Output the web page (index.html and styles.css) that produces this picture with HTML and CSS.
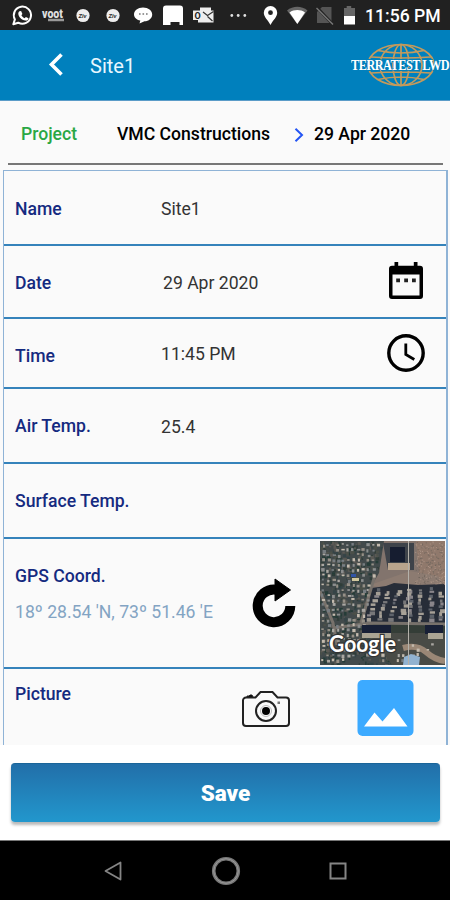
FILE: index.html
```html
<!DOCTYPE html>
<html lang="en">
  <head>
    <meta charset="UTF-8" />
    <meta name="viewport" content="width=device-width, initial-scale=1.0" />
    <title>Site1</title>
    <link rel="stylesheet" href="styles.css">
  </head>
  <body>
    <div class="statusbar">
      <svg class="statusbar_icons" width="248" height="30" viewBox="0 0 248 30">
        <!-- whatsapp -->
        <path d="M13.3 24.3l1.6-4.9a8.6 8.6 0 1 1 3.3 3.3z" fill="none" stroke="#fff" stroke-width="2" stroke-linejoin="round" />
        <path d="M19.4 11.3l1.7-.3 1.3 3-1 1.3c.8 1.5 1.8 2.3 3.2 2.9l1.3-1.3 2.6 1.3c0 1.8-1.5 2.6-3 2.4-4-.6-7.3-4.3-7.2-7.2 0-.9.4-1.6 1.100-2.100z" fill="#fff" />
        <!-- voot -->
        <text class="voot" x="42" y="18" textLength="21" lengthAdjust="spacingAndGlyphs">voot</text>
        <path d="M48 20h16" stroke="#999" stroke-width="2.500" />
        <circle cx="83" cy="15.500" r="6.600" fill="#eee" />
        <text class="zee" x="78.500" y="18">Ziv</text>
        <circle cx="113" cy="15.500" r="6.600" fill="#eee" />
        <text class="zee" x="108.500" y="18">Ziv</text>
        <!-- message -->
        <path d="M143 7.500c5.200 0 9.200 2.900 9.200 6.900s-3.500 6.600-7.700 6.900l-5 2.200.8-2.900c-3.900-1-6.300-3.300-6.300-6.200 0-4 3.900-6.900 9-6.900z" fill="#fff" />
        <path d="M139 14h1.600M142.500 14h1.600M146 14h1.600" stroke="#777" stroke-width="1.300" />
        <path d="M166 5.500h14a3 3 0 0 1 3 3V25h-3.500v-3h-9v3H163V8.500a3 3 0 0 1 3-3z" fill="#fff" />
        <!-- outlook -->
        <path d="M200 7.500h11v3h2.500v12H198V20h-5v-9.500h7z" fill="#eee" />
        <text class="outlook" x="194.500" y="19">O</text>
        <path d="M203 12l4.500 3.500 6-4M207.500 16.500l5 4.500" fill="none" stroke="#333" stroke-width="1.200" />
        <g fill="#e0e0e0">
          <circle cx="231.800" cy="15.500" r="1.400" />
          <circle cx="238.200" cy="15.500" r="1.400" />
          <circle cx="244.800" cy="15.500" r="1.400" />
        </g>
      </svg>
      <div class="statusbar_right">
        <svg width="94" height="30" viewBox="0 0 94 30">
          <path fill-rule="evenodd" d="M7.500 6a6.700 6.700 0 0 1 6.700 6.700c0 4.300-4.200 7.300-6.700 12.300C5 20 .8 17 .8 12.700A6.700 6.700 0 0 1 7.500 6zm0 4.300a2.400 2.400 0 1 0 0 4.800 2.400 2.400 0 0 0 0-4.800z" fill="#fff" />
          <path d="M24 10.500c6-5 14.500-5 20.500 0L34.300 24z" fill="#666" />
          <path d="M26.500 12.500c4.700-3.200 10.900-3.200 15.500 0L34.300 24z" fill="#fff" />
          <path d="M59 7h9.500v16H54V12z" fill="#555" />
          <path d="M54 7.500l16 17" stroke="#222" stroke-width="3" />
          <path d="M53.500 8l16.500 16.500" stroke="#777" stroke-width="1.500" />
          <path d="M83.700 6h4.500v2H92v9H81V8h2.700z" fill="#666" />
          <path d="M81 16h11v8.500H81z" fill="#fff" />
        </svg>
        <span class="clock">11:56 PM</span>
      </div>
    </div>

    <header class="header">
      <svg class="header_back" width="16" height="24" viewBox="0 0 16 24">
        <path d="M13.500 2.500L3.500 12.500l10 10" fill="none" stroke="#fff" stroke-width="3.600" />
      </svg>
      <h1>Site1</h1>
      <div class="header_logo">
        <svg width="68" height="46" viewBox="16 0 68 46">
          <g fill="none" stroke="#c49a5c" stroke-width="1.700">
            <ellipse cx="50" cy="24" rx="33" ry="20.500" />
            <ellipse cx="50" cy="24" rx="21" ry="20.500" />
            <ellipse cx="50" cy="24" rx="8" ry="20.500" />
            <path d="M50 3.500v41M27 9.500q23 5 46 0M20 16q30 2 60 0M27 38.500q23-5 46 0M20 32q30-2 60 0" />
          </g>
        </svg>
        <span class="logo_text">TERRATEST LWD</span>
      </div>
    </header>

    <nav class="project">
      <span class="project_label">Project</span>
      <span class="project_name">VMC Constructions</span>
      <svg width="10" height="16" viewBox="0 0 10 16">
        <path d="M1.500 2.800L8 9l-6.500 6.200" fill="none" stroke="#2455f4" stroke-width="2" />
      </svg>
      <span class="project_date">29 Apr 2020</span>
    </nav>

    <main class="form">
      <div class="row row_name">
        <label>Name</label>
        <span class="value value_name">Site1</span>
      </div>
      <div class="row row_date">
        <label>Date</label>
        <span class="value value_date">29 Apr 2020</span>
        <svg class="row_icon" width="36" height="40" viewBox="0 0 36 40">
          <path fill-rule="evenodd" d="M6.500 1h3.700v3.700h15.600V1h3.700v3.700H32a3 3 0 0 1 3 3V35a3 3 0 0 1-3 3H4a3 3 0 0 1-3-3V7.700a3 3 0 0 1 3-3h2.500zM4.500 13.500v21h27v-21z" />
          <path d="M8.200 17.500H12v3.700H8.200zM16.200 17.500H20v3.700h-3.800zM24 17.500h3.800v3.700H24z" fill="#222" />
        </svg>
      </div>
      <div class="row row_time">
        <label>Time</label>
        <span class="value value_time">11:45 PM</span>
        <svg class="row_icon" width="38" height="38" viewBox="0 0 38 38">
          <circle cx="19" cy="19" r="17.200" fill="none" stroke="#000" stroke-width="3.400" />
          <path d="M18.800 9.500v11l8.500 5" fill="none" stroke="#000" stroke-width="2.800" />
        </svg>
      </div>
      <div class="row row_air">
        <label>Air Temp.</label>
        <span class="value value_air">25.4</span>
      </div>
      <div class="row row_surface">
        <label>Surface Temp.</label>
      </div>
      <div class="row row_gps">
        <div class="gps_text">
          <label>GPS Coord.</label>
          <p>18º 28.54 'N, 73º 51.46 'E</p>
        </div>
        <svg class="gps_refresh" width="44" height="50" viewBox="0 0 44 50">
          <path d="M24 11.700A16.300 16.300 0 1 0 38.300 28" fill="none" stroke="#000" stroke-width="10" />
          <path d="M23 1L38.500 12 23 23z" stroke="#000" stroke-linejoin="round" />
        </svg>
        <svg class="gps_map" id="map" width="125" height="124" viewBox="0 0 125 124">
          <rect width="125" height="124" fill="#424a4b" />
          <g id="trees"></g>
          <path d="M64 0h61v60l-12 2-58-2-7-9 11-19z" fill="#82746d" />
          <path d="M96 0h29v44l-25-1z" fill="#90796c" />
          <path d="M50 44l40-14 28 5 7 10-25 4-50-4z" fill="#8c7b71" />
          <path d="M63 2h31v27H68z" fill="#3e434a" />
          <path d="M70 6h15v15H70z" fill="#161d30" />
          <path d="M68 22h22v7H68z" fill="#b8a48d" />
          <path d="M52 47l14-2 8-3 24 2 27-1v39H43z" fill="#272d38" />
          <path d="M42 82h83v42H72z" fill="#494b46" />
          <path d="M55 82l70 3v7H42z" fill="#343d37" />
          <path d="M0 50l13 32 4 22M13 87l38-5 74 1M55 34L41 82" fill="none" stroke="#77716b" stroke-width="3" />
          <path d="M83 107q14-4 23 4t19 9" fill="none" stroke="#9a8776" stroke-width="6" />
          <g id="houses"></g>
          <path d="M42 84h29v9H42zM105 84h18v9h-18z" fill="#182036" />
          <path d="M42 92h29v5H42zM108 92h15v6h-15z" fill="#aaa494" />
          <path d="M84 116l7-3 9 3-1 8H83z" fill="#91b2d0" />
          <path d="M31 33h5v3h-5z" fill="#3154a5" />
          <path d="M32 37h7v3h-7z" fill="#d1c89f" />
          <path d="M88.500 0v124" stroke="#b4b1aa" />
          <text class="google" x="9" y="111" textLength="67" lengthAdjust="spacingAndGlyphs">Google</text>
        </svg>
      </div>
      <div class="row row_picture">
        <label>Picture</label>
        <svg class="picture_camera" width="48" height="38" viewBox="0 0 48 38">
          <path d="M4 7.500h9.500l5-5.500h12l5 5.500H44a3 3 0 0 1 3 3V33a3 3 0 0 1-3 3H4a3 3 0 0 1-3-3V10.500a3 3 0 0 1 3-3z" fill="none" stroke="#222" stroke-width="2" />
          <path d="M5 7V6h2l1-1h2l1 2z" stroke="#222" />
          <circle cx="24" cy="21" r="10" fill="none" stroke="#222" stroke-width="2" />
          <circle cx="24" cy="21" r="5.500" fill="none" stroke="#bbb" />
          <circle cx="24" cy="21" r="4" />
          <path d="M35.500 11.500h2.500v2.500h-2.500z" fill="#777" />
        </svg>
        <svg class="picture_gallery" width="57" height="57" viewBox="0 0 57 57">
          <rect x=".5" width="56" height="56" rx="5" fill="#3caaff" />
          <path d="M7 46.500l10.500-14 8 9L37 28 50.500 46.500z" fill="#fff" />
        </svg>
      </div>
    </main>

    <div class="actions">
      <button class="save"><span>Save</span></button>
    </div>

    <footer class="navbar">
      <svg width="20" height="22" viewBox="0 0 20 22">
        <path d="M2.500 11L17.500 2.500v17z" fill="none" stroke="#858585" stroke-width="1.800" stroke-linejoin="round" />
      </svg>
      <svg width="30" height="30" viewBox="0 0 30 30">
        <circle cx="15" cy="15" r="12.300" fill="none" stroke="#777" stroke-width="3.600" />
        <circle cx="15" cy="15" r="12.300" fill="none" stroke="#999" />
      </svg>
      <svg width="20" height="20" viewBox="0 0 20 20">
        <rect x="2.500" y="2.500" width="15" height="15" fill="none" stroke="#858585" stroke-width="2" />
      </svg>
    </footer>

    <script src="map.js"></script>
  </body>
</html>
```
FILE: styles.css
```css
/* variables */
:root {
  --blue: #0080bd;
  --label: #152a80;
  --line: #3583bb;
  --surface: #fafafa;
}

/* base */
*,
::before,
::after {
  box-sizing: border-box;
  margin: 0;
  padding: 0;
}
body {
  width: 450px;
  height: 900px;
  display: flex;
  flex-direction: column;
  overflow: hidden;
  background-color: white;
  font-family: Roboto, "Liberation Sans", sans-serif;
  font-size: 17.6px;
}
svg {
  display: block;
  flex: none;
}
span,
label,
p {
  white-space: nowrap;
}

/* status bar */
.statusbar {
  height: 30px;
  flex: none;
  display: flex;
  justify-content: space-between;
  background-color: #212121;
}
.statusbar_right {
  display: flex;
  align-items: center;
  padding-right: 10px;
}
.clock {
  width: 75px;
  margin-left: 8px;
  padding-top: 2px;
  color: white;
  font-size: 17.6px;
  font-weight: 500;
}
.voot {
  fill: #ddd;
  font-size: 12px;
  font-weight: 900;
}
.zee {
  fill: #333;
  font-size: 6px;
  font-weight: bold;
  font-style: italic;
}
.outlook {
  fill: #222;
  font-size: 9px;
  font-weight: bold;
}

/* header section */
.header {
  height: 71px;
  flex: none;
  display: flex;
  align-items: center;
  padding: 0 0 2px 48px;
  background-color: var(--blue);
  border-bottom: 1px solid #5b9cc8;
}
.header h1 {
  margin-left: 26px;
  padding-top: 3px;
  color: #e8f7ff;
  font-size: 20px;
  font-weight: 400;
}
.header_logo {
  position: relative;
  display: flex;
  justify-content: center;
  width: 99px;
  margin-left: auto;
}
.logo_text {
  position: absolute;
  top: 14px;
  left: 0;
  color: white;
  font-family: "Liberation Serif", serif;
  font-size: 15.5px;
  font-weight: bold;
  line-height: 19px;
  letter-spacing: -0.6px;
  text-shadow: 0 1px var(--blue), 0 -1px var(--blue);
  transform: scaleX(0.79);
  transform-origin: left;
}

/* project line */
.project {
  height: 64px;
  flex: none;
  display: flex;
  align-items: center;
  margin-right: 7px;
  margin-left: 8px;
  padding-top: 3px;
  padding-left: 13px;
  border-bottom: 2px solid #777;
  font-weight: 500;
}
.project::before {
  content: "";
  position: absolute;
  top: 101px;
  left: 0;
  z-index: -1;
  width: 450px;
  height: 644px;
  background-color: var(--surface);
}
.project_label {
  width: 96px;
  color: #29a745;
}
.project_name {
  width: 177px;
}
.project_date {
  margin-left: 10px;
}

/* form rows */
.form {
  height: 575px;
  flex: none;
  margin: 5px 2px 0 3px;
  border: 1px solid #8fb3d6;
  border-width: 1px 2px 0 1px;
}
.row {
  display: flex;
  align-items: center;
  padding-left: 11px;
  border-bottom: 2px solid var(--line);
}
.row label {
  width: 146px;
  padding-top: 2px;
  color: var(--label);
  font-weight: 500;
}
.value {
  padding-top: 2px;
  color: #333;
}
.row_icon {
  margin-right: 21px;
  margin-left: auto;
}
.row_name {
  height: 75px;
}
.row_date {
  height: 73px;
}
.row_date .value {
  margin-left: 2px;
}
.row_date .row_icon {
  margin-right: 22px;
  margin-bottom: 2px;
}
.row_time {
  height: 70px;
}
.row_time label {
  padding-top: 5px;
}
.row_time .value {
  padding-top: 1px;
}
.row_air {
  height: 75px;
}
.row_surface {
  height: 75px;
}
.row_air label,
.row_surface label {
  padding-top: 1px;
}
.row_gps {
  height: 130px;
}
.gps_text {
  width: 237px;
  height: 100%;
  padding-top: 27px;
}
.gps_text p {
  margin-top: 16px;
  color: #83a4c3;
}
.gps_refresh {
  margin-top: -1px;
}
.gps_map {
  margin-right: 1px;
  margin-left: auto;
}
.google {
  fill: white;
  stroke: #333;
  stroke-width: 2.5px;
  paint-order: stroke;
  font-family: Lato, sans-serif;
  font-size: 23px;
  font-weight: 700;
}
.row_picture {
  height: 76px;
  border-bottom: 0;
}
.row_picture label {
  width: 227px;
  align-self: flex-start;
  padding-top: 15px;
}
.picture_camera {
  margin-top: 3px;
}
.picture_gallery {
  margin-top: 2px;
  margin-left: 67px;
}

/* save button */
.actions {
  height: 95px;
  flex: none;
  padding: 18px 10px 0 11px;
}
.save {
  width: 100%;
  height: 59px;
  border: 0;
  border-top: 1px solid #1a6599;
  border-radius: 4px;
  background: linear-gradient(#226fa9, #2297cd);
  box-shadow: 0 3px 3px rgba(0, 0, 0, 0.28);
  color: white;
  font-family: inherit;
  font-size: 22.5px;
  font-weight: 900;
}

/* system navigation */
.navbar {
  height: 60px;
  flex: none;
  display: flex;
  align-items: center;
  justify-content: space-between;
  padding: 0 102px 0 103px;
  border-top: 1px solid #777;
  background-color: black;
}
```
FILE: map.js
```js
const trees = document.getElementById("trees");
const houses = document.getElementById("houses");
let seed = 17;

function random() {
  seed = (seed * 16807) % 2147483647;
  return seed / 2147483647;
}

function addRect(group, x, y, width, height, fill) {
  const rect = document.createElementNS("http://www.w3.org/2000/svg", "rect");
  rect.setAttribute("x", x);
  rect.setAttribute("y", y);
  rect.setAttribute("width", width);
  rect.setAttribute("height", height);
  rect.setAttribute("fill", fill);
  group.appendChild(rect);
}

function pick(colors) {
  return colors[Math.floor(random() * colors.length)];
}

// tree cover
for (let i = 0; i < 1300; i++) {
  addRect(trees, random() * 124, random() * 123, 1 + random() * 3, 1 + random() * 3,
    pick(["#303d39", "#253c37", "#4b5049", "#354447", "#5a5954"]));
}

// small houses on the left and along the bottom
for (let y = 2; y < 122; y += 5) {
  for (let x = 1; x < 122; x += 5) {
    const left = x < 57 - y / 6;
    const bottom = y > 94;
    if ((left || bottom) && random() < (left ? 0.75 : 0.2)) {
      addRect(houses, x + random() * 2, y + random() * 2, 2 + random() * 1.5, 1.5 + random() * 2,
        pick(["#aaa7a2", "#8c8e8e", "#c4bbae", "#777d81", "#969087"]));
    }
  }
}

// apartment blocks
for (let column = 0; column < 8; column++) {
  for (let y = 46 + random() * 5; y < 78; y += 2.5 + random() * 2) {
    const lean = column < 4 ? (79 - y) / 3 : 0;
    addRect(houses, 45 + column * 10.5 + lean + random() * 2, y, 2.5 + random() * 3, 2 + random() * 2,
      pick(["#a39d94", "#777779", "#a8a298", "#89858a", "#5e636b"]));
  }
}

// grain on the open ground
for (let i = 0; i < 220; i++) {
  addRect(houses, 95 + random() * 29, random() * 43, 1, 1, pick(["#6f655d", "#ad9587"]));
}
```
